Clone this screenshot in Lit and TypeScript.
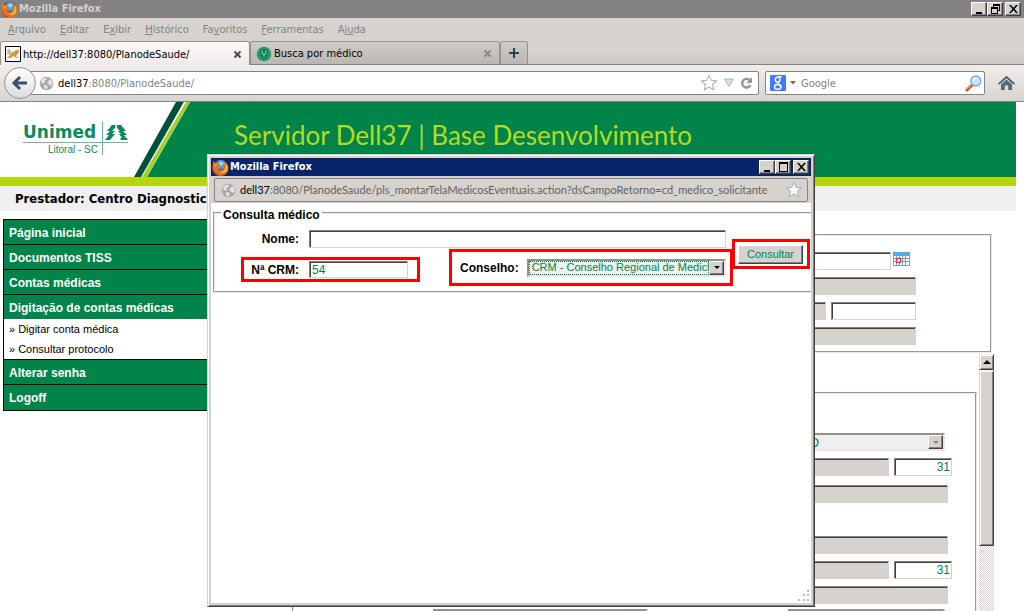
import { LitElement, html, css, svg } from "lit";
import { customElement, property } from "lit/decorators.js";

const firefox = html`<svg class="fx" viewBox="0 0 16 16" aria-hidden="true">
  <circle cx="8" cy="8" r="7.2" fill="#1d5c9e"/>
  <circle cx="8.4" cy="5.2" r="4.2" fill="#4fa3dc"/>
  <path d="M6.5 2.5l2 .6 2.4-.4-.6 2.2-2.4 1.6z" fill="#a7dcf4"/>
  <path d="M1.5 1.6L3.2 4C4.4 3.3 5.6 3.4 6.8 3.9L5.9 5.9 8.2 6.6 7.4 8 5.6 8.4C6 10.4 8.4 11 10 9.8 11.6 8.8 12 6.6 11.2 4.6L10.4 2.2C13.4 3 15.8 5.6 15.6 9 15.4 13 12 15.9 8 15.9 3.6 15.9.4 12.6.4 8.6.3 5.8.8 3.6 1.5 1.6z" fill="#e8701a"/>
  <path d="M12.6 4C15 6.4 15 10 13 12 11 13.6 8.6 13.4 7 12.6 10.6 12.8 13.6 9.6 12.6 4z" fill="#fbc02d"/>
  <path d="M1 8C1.4 12 4 14.8 8 15.2 4 15.8.6 12.6 1 8z" fill="#9c2a0c"/>
  <path d="M2 3.4L3 5 6 4.6 4.2 5.8 3.2 8z" fill="#ffa53a"/>
</svg>`;

const globe = html`<svg class="globe" viewBox="0 0 16 16" aria-hidden="true">
  <circle cx="8" cy="8" r="7.2" fill="#a9a9a9"/>
  <path d="M3 3.6C5 1.8 7 1.6 8.6 2L7.6 4 5.8 5.4 6.4 7.4 4 8 2 6.4zM10 5l2.4-1.6C14 5 14.6 7 14.2 9.2L12 10.6 10.6 8.8 8.8 8zM5.4 9.6L8.4 10l1.2 1.8L8 14.2C6.4 14 5.4 12.6 5.2 11z" fill="#e4e4e4"/>
</svg>`;

const star = html`<svg class="star" viewBox="0 0 18 18" aria-hidden="true">
  <path d="M9 1.4l2.2 5 5.4.5-4.1 3.6 1.3 5.4L9 13.1l-4.8 2.8 1.3-5.4L1.4 6.9l5.4-.5z" fill="#fff" stroke="#b5b2b5" stroke-width="1.1" stroke-linejoin="round"/>
</svg>`;

const glyphs: Record<string, unknown> = {
  min: svg`<path d="M3 9h6v2H3z"/>`,
  max: svg`<path d="M2 1h9v10H2zM3 3v7h7V3z" fill-rule="evenodd"/>`,
  restore: svg`<path d="M4 1h7v7H9V7h1V3H5v1H4zM2 4h7v7H2zM3 6v4h5V6z" fill-rule="evenodd"/>`,
  close: svg`<path d="M2 2h2l2.500 2.800L9 2h2L7.500 6 11 10H9L6.500 7.200 4 10H2l3.500-4z"/>`,
};

@customElement("caption-buttons")
class CaptionButtons extends LitElement {
  @property() middle = "max";
  static styles = css`
    :host { display: flex; margin-left: auto; }
    button { width: 16px; height: 14px; padding: 0; border: 1px solid; border-color: #fff #424142 #424142 #fff; background: #d6d3ce; box-shadow: inset -1px -1px #848284; display: grid; place-items: center; }
    button:last-child { margin-left: 2px; }
    svg { width: 13px; height: 12px; }
  `;
  render() {
    const items = [["min", "Minimizar"], [this.middle, "Maximizar"], ["close", "Fechar"]];
    return items.map(([k, label]) => html`<button aria-label=${label}><svg viewBox="0 0 13 12">${glyphs[k]}</svg></button>`);
  }
}

const palette = css`
  :host { --face: #d6d3ce; --green: #00844a; --shade: #848284; --dark: #424142; --ui: "DejaVu Sans Condensed", "DejaVu Sans", sans-serif; --form: "Liberation Sans", Arial, sans-serif; }
  * { box-sizing: border-box; }
  button, input, select { font: inherit; margin: 0; }
  a { color: inherit; text-decoration: none; }
  svg { display: block; flex: none; }
  .fx { width: 17px; height: 17px; }
  .globe { width: 15px; height: 15px; }
  .star { width: 18px; height: 18px; }
  .field { height: 18px; border: 1px solid; border-color: var(--shade) var(--face) var(--face) var(--shade); box-shadow: inset 1px 1px var(--dark); background: #fff; border-radius: 0; padding: 0 2px; color: var(--green); font: 12px/14px var(--form); outline: 0; min-width: 0; }
  .combo { display: flex; height: 18px; min-width: 0; border: 2px solid; border-color: #949284 #efe7e7 #efe7e7 #949284; background: #efefef; }
  .combo select { flex: 1; min-width: 0; width: 0; appearance: none; border: 0; padding: 0 0 0 3px; background: none; color: var(--green); opacity: 1; font: 11px/13px var(--form); border-radius: 0; outline: 0; }
  .combo i { width: 15px; flex: none; background: var(--face); border: 1px solid; border-color: #fff var(--dark) var(--dark) #fff; box-shadow: inset -1px -1px var(--shade); display: grid; place-items: center; }
  .combo i::after { content: ""; border: 3px solid transparent; border-top-color: #000; border-bottom: 0; }
  fieldset { min-width: 0; margin: 0; padding: 0; border: 2px groove #efe7e7; }
`;

@customElement("popup-window")
class PopupWindow extends LitElement {
  static styles = [palette, css`
    :host { display: flex; flex-direction: column; border: 1px solid; border-color: var(--face) var(--dark) var(--dark) var(--face); background: var(--face); box-shadow: inset 1px 1px #fff, inset -1px -1px var(--shade); padding: 3px; }
    .title { display: flex; align-items: center; height: 18px; gap: 1px; padding: 0 2px 0 1px; background: #08246b; color: #fff; font: bold 11px/18px var(--ui); }
    .url { display: flex; align-items: center; height: 24px; margin: 2px 3px 1px; padding: 0 4px 0 6px; border: 1px solid var(--shade); border-radius: 2px; font: 11px/22px Lato, sans-serif; color: #63615f; white-space: nowrap; }
    .url .globe { margin-right: 4px; }
    .url b { font-weight: normal; color: #000; }
    .url .star { margin-left: auto; }
    .page { flex: 1; background: #fff; overflow: hidden; position: relative; }
    fieldset { margin: 1px -2px 0 2px; padding: 9px 0 5px; }
    legend { margin-left: 6px; padding: 6px 2px 0; font: bold 12px/11px var(--form); }
    label { font: bold 12px/14px var(--form); text-align: right; flex: none; }
    form { display: flex; align-items: flex-start; min-width: 0; }
    .fields { flex: 1; min-width: 0; }
    .row { display: flex; align-items: center; gap: 10px; padding-right: 7px; }
    .row label { width: 84px; }
    .row .field { flex: 1; }
    .second { display: flex; justify-content: space-between; align-items: flex-start; margin-top: 1px; padding-left: 26px; }
    .mark { border: 3px solid #f00; display: flex; align-items: center; gap: 10px; }
    .crm { width: 179px; height: 25px; margin-top: 8px; padding-right: 9px; }
    .crm label { width: 55px; }
    .crm .field { flex: 1; height: 17px; }
    .council { width: 284px; height: 37px; padding: 0 4px 0 8px; gap: 8px; }
    .council .combo { flex: 1; }
    .council select { outline: 1px dotted var(--green); outline-offset: -1px; }
    .submit { margin: 9px 1px 0 -1px; padding: 0 4px 0 3px; width: 78px; height: 30px; flex: none; }
    .submit button { flex: 1; height: 19px; padding: 0; border: 1px solid; border-color: #fff var(--dark) var(--dark) #fff; box-shadow: inset -1px -1px var(--shade); background: var(--face); color: var(--green); font: 11px/16px var(--form); }
    .grip { position: absolute; right: 2px; bottom: 2px; width: 11px; height: 11px; fill: #bdbabd; }
  `];
  render() {
    return html`
      <div class="title">${firefox}<span>Mozilla Firefox</span><caption-buttons></caption-buttons></div>
      <div class="url">${globe}<b>dell37</b>:8080/PlanodeSaude/pls_montarTelaMedicosEventuais.action?dsCampoRetorno=cd_medico_solicitante${star}</div>
      <div class="page">
        <fieldset>
          <legend>Consulta médico</legend>
          <form @submit=${(e: Event) => e.preventDefault()}>
            <div class="fields">
              <div class="row"><label for="nome">Nome:</label><input class="field" id="nome"></div>
              <div class="second">
                <div class="mark crm"><label for="crm">Nª CRM:</label><input class="field" id="crm" value="54"></div>
                <div class="mark council"><label for="conselho">Conselho:</label><span class="combo"><select id="conselho"><option>CRM - Conselho Regional de Medicina</option></select><i></i></span></div>
              </div>
            </div>
            <div class="mark submit"><button>Consultar</button></div>
          </form>
        </fieldset>
        <svg class="grip" viewBox="0 0 11 11"><path d="M9 0h2v2H9zM5 4h2v2H5zM9 4h2v2H9zM0 9h2v2H0zM5 9h2v2H5zM9 9h2v2H9z"/></svg>
      </div>`;
  }
}

@customElement("app-root")
class AppRoot extends LitElement {
  static styles = [palette, css`
    :host { display: flex; flex-direction: column; height: 100vh; position: relative; overflow: hidden; background: #fff; font: 11px/14px var(--ui); }
    .title { display: flex; align-items: center; gap: 1px; height: 18px; flex: none; padding: 0 3px 0 1px; background: var(--shade); color: var(--face); font: bold 11px/18px var(--ui); }
    .menu { display: flex; gap: 14px; padding: 0 8px; height: 23px; flex: none; background: var(--face); color: #848284; line-height: 23px; }
    .tabs { display: flex; height: 24px; flex: none; background: linear-gradient(#d6d3ce 50%, #cbc8c5); border-bottom: 1px solid #848284; }
    .tab { display: flex; align-items: center; width: 250px; padding: 1px 6px 0 5px; gap: 2px; border: 1px solid #94918f; border-bottom: 0; border-radius: 3px 3px 0 0; background: linear-gradient(#cfccc8, #b9b6b3); }
    .tab span { padding-top: 1px; }
    .tab.on { background: linear-gradient(#fbf9f9, #efebe9); margin-bottom: -1px; padding-left: 4px; }
    .tab button { margin-left: auto; width: 10px; height: 12px; padding: 0; border: 0; background: none; }
    .tab button svg { width: 9px; height: 9px; stroke: #8a8886; stroke-width: 2; }
    .tab.on button svg { stroke: #4a4a4a; }
    .ico { width: 16px; height: 16px; }
    .plus { width: 28px; padding: 0; border: 1px solid #94918f; border-bottom: 0; border-radius: 3px 3px 0 0; background: linear-gradient(#cfccc8, #b9b6b3); display: grid; place-items: center; }
    .nav { display: flex; align-items: center; height: 37px; flex: none; padding: 0 9px 0 4px; background: linear-gradient(#f1edeb, #d8d4d1); border-bottom: 1px solid #848284; }
    .back { width: 32px; height: 32px; padding: 0; flex: none; border: 1px solid #94929c; border-radius: 50%; background: linear-gradient(#fff, #dedbe0); display: grid; place-items: center; z-index: 1; }
    .bar { display: flex; align-items: center; height: 24px; border: 1px solid #848284; border-radius: 2px; background: #fff; color: #848284; }
    .bar input { border: 0; outline: 0; padding: 2px 0 0; min-width: 0; flex: 1; background: none; color: #848284; }
    .bar input::placeholder { color: #848284; opacity: 1; }
    .bar b { font-weight: normal; color: #000; }
    .bar span { padding-top: 2px; }
    .address { flex: 1; margin-left: -15px; padding: 0 4px 0 17px; }
    .address .globe { margin-right: 4px; }
    .address .star { margin-left: auto; }
    .drop { margin-left: 5px; }
    .reload { margin: 0 1px 0 5px; }
    .engine { margin: 0 5px 0 4px; }
    .search { width: 220px; margin: 0 13px 0 6px; padding: 0 2px 0 4px; }
    .banner { display: flex; height: 84px; flex: none; margin-right: 8px; background: var(--green); border-bottom: 9px solid #b5d60f; }
    .brand { width: 190px; flex: none; display: grid; }
    .brand > * { grid-area: 1 / 1; }
    .slash { width: 190px; height: 75px; }
    .logo { display: grid; grid-template-columns: 79px 26px; margin: 20px 0 0 23px; align-content: start; color: #0f8a5f; }
    .logo strong { font: bold 17px/20px "DejaVu Sans", sans-serif; border-bottom: 1px solid #6fb59c; }
    .logo small { grid-row: 2; font: 10px/14px var(--form); text-align: right; padding-right: 4px; }
    .logo .pines { grid-row: 1 / 3; grid-column: 2; width: 26px; height: 35px; }
    h1 { margin: 0; padding: 17px 0 0 44px; font: 26px/32px Lato, sans-serif; color: #b5db21; white-space: nowrap; }
    .provider { height: 25px; flex: none; margin-right: 8px; padding-left: 15px; background: #efefef; font: bold 13px/25px var(--ui); }
    .body { display: flex; flex: 1; min-height: 0; padding: 0 30px 0 3px; }
    .side { width: 212px; flex: none; align-self: flex-start; margin-top: 8px; border: 1px solid #000; border-top: 0; }
    .side a { display: block; height: 25px; padding-left: 5px; border-top: 1px solid #000; background: var(--green); color: #fff; font: bold 12px/26px var(--form); }
    .side a.sub { height: 20px; border: 0; background: #fff; color: #000; font: 11px/20px var(--form); }
    .side a:last-child { height: 26px; }
    .main { flex: 1; min-width: 0; display: flex; flex-direction: column; margin-left: 77px; }
    .line { display: flex; justify-content: flex-end; gap: 5px; margin-bottom: 7px; height: 18px; }
    .line .field { width: 420px; }
    .line .off { background: var(--face); border-color: var(--shade) var(--face) var(--face); box-shadow: inset 0 1px var(--dark); }
    .line .num { width: 58px; text-align: right; padding-right: 1px; }
    .line .mid { width: 85px; }
    .line .rest { width: 320px; }
    .one { margin: 23px 2px 0 0; padding: 16px 74px 0 0; height: 119px; flex: none; }
    .cal { width: 17px; height: 14px; margin-right: 6px; }
    .line .date { margin-right: -3px; }
    .frame { flex: 1; min-height: 0; display: flex; gap: 2px; margin-top: 1px; }
    .scroll { flex: 1; overflow: hidden; padding-top: 38px; }
    .two { padding: 39px 27px 40px 0; }
    .two .count { margin-right: -4px; }
    .two .first { margin-bottom: 9px; }
    .two .tight { margin-bottom: 5px; }
    .two .gap { margin-bottom: 33px; }
    .two .pick, .two .last { margin-right: 3px; }
    .pick .combo { width: 141px; }
    .pick .combo select { font-size: 13px; }
    .pick .combo i::after { border-top-color: var(--shade); }
    .last { justify-content: space-between; padding-left: 139px; }
    .last .combo { width: 157px; }
    .last .combo:first-child { width: 215px; }
    .track { width: 15px; flex: none; display: flex; flex-direction: column; background: repeating-conic-gradient(#d6d3ce 0 25%, #fff 0 50%) 0 0 / 2px 2px; }
    .track button, .thumb { border: 1px solid; border-color: #efebe7 var(--dark) var(--dark) var(--face); box-shadow: inset 1px 1px #fff, inset -1px -1px var(--shade); background: var(--face); padding: 0; flex: none; }
    .track button { height: 16px; display: grid; place-items: center; }
    .thumb { height: 176px; }
    .popup { position: absolute; left: 207px; top: 154px; width: 608px; height: 453px; z-index: 2; }
  `];
  render() {
    const menu = [["", "A", "rquivo"], ["", "E", "ditar"], ["E", "x", "ibir"], ["", "H", "istórico"], ["Fa", "v", "oritos"], ["", "F", "erramentas"], ["Aj", "u", "da"]];
    const x = html`<svg viewBox="0 0 9 9"><path d="M1.500 1.500l6 6M7.500 1.500l-6 6"/></svg>`;
    const off = (cls = "") => html`<input class="field off ${cls}" disabled aria-label="Campo bloqueado">`;
    return html`
      <div class="title">${firefox}<span>Mozilla Firefox</span><caption-buttons middle="restore"></caption-buttons></div>
      <nav class="menu">${menu.map(([a, b, c]) => html`<span>${a}<u>${b}</u>${c}</span>`)}</nav>
      <div class="tabs">
        <div class="tab on">
          <svg class="ico" viewBox="0 0 16 16"><path d="M.5 .5h15v15H.5z" fill="#fff" stroke="#000"/><path d="M2 12l3-3 1-2.500L9 6l2-2.500 1 1 2-1-.2 3L12 8.500l-1 2 3 1.500h-3L8.500 10 6 12z" fill="#d69a3a"/><path d="M2 4l3 3M2 7l3 1M3.500 3l2 3" stroke="#7a6a4a" stroke-width=".8"/></svg>
          <span>http://dell37:8080/PlanodeSaude/</span><button aria-label="Fechar aba">${x}</button>
        </div>
        <div class="tab">
          <svg class="ico" viewBox="0 0 16 16"><circle cx="8" cy="8" r="7.300" fill="#2a9a6a"/><path d="M4 4q4-2 8 0v4q-1 4-4 5-3-1-4-5z" fill="#0f7a4e"/><path d="M6 4.500v2q0 2 2 2t2-2v-2M8 8.500V11" stroke="#a6e0c6" fill="none"/></svg>
          <span>Busca por médico</span><button aria-label="Fechar aba">${x}</button>
        </div>
        <button class="plus" aria-label="Nova aba"><svg width="12" height="12" viewBox="0 0 12 12"><path d="M6 1v10M1 6h10" stroke="#29424f" stroke-width="2"/></svg></button>
      </div>
      <div class="nav">
        <button class="back" aria-label="Voltar"><svg width="18" height="16" viewBox="0 0 18 16"><path d="M9 2L3 8l6 6M3 8h13" fill="none" stroke="#3d5163" stroke-width="3"/></svg></button>
        <div class="bar address">${globe}<span><b>dell37</b>:8080/PlanodeSaude/</span>${star}
          <svg class="drop" width="12" height="10" viewBox="0 0 12 10"><path d="M1.500 1h9L6 8.500z" fill="#d6dfe8" stroke="#b0b6bd"/></svg>
          <svg class="reload" width="13" height="14" viewBox="0 0 13 14"><path d="M9.800 4.400A4.300 4.300 0 1 0 10.400 9" fill="none" stroke="#8a98a5" stroke-width="2.400"/><path d="M12 1v6H6.500z" fill="#8a98a5"/></svg>
        </div>
        <div class="bar search">
          <svg width="16" height="16" viewBox="0 0 16 16"><rect width="16" height="16" rx="1" fill="#3f7bfb"/><ellipse cx="7.700" cy="4.600" rx="2.300" ry="2.700" fill="none" stroke="#fff" stroke-width="1.500"/><ellipse cx="7.700" cy="11.900" rx="3.200" ry="2.300" fill="none" stroke="#fff" stroke-width="1.500"/><path d="M8 1.700h4M8.500 7.300q-1.500 1 0 1.700 2 .8 2.400 2" fill="none" stroke="#fff" stroke-width="1.300"/></svg>
          <svg class="engine" width="6" height="4" viewBox="0 0 6 4"><path d="M0 0h6L3 3.500z" fill="#6b6b6b"/></svg>
          <input placeholder="Google" aria-label="Pesquisar com Google">
          <svg width="17" height="17" viewBox="0 0 17 17"><path d="M7.500 9.500L2 15" stroke="#b5561c" stroke-width="3" stroke-linecap="round"/><path d="M7 9L2 14" stroke="#f0a24a" stroke-width="1.200" stroke-linecap="round"/><circle cx="10.800" cy="6" r="5" fill="#c4e4fb" stroke="#7fa6cc" stroke-width="1.300"/><path d="M8 5.500q1-2.500 3.500-2.300" stroke="#fff" stroke-width="1.400" fill="none"/></svg>
        </div>
        <svg width="17" height="16" viewBox="0 0 17 16"><path d="M8.500.8L17 8.600l-1.300 1.200L8.500 3.300 1.300 9.800 0 8.600z" fill="#4a5c6a"/><path d="M3 9.500l5.500-5 5.500 5V15h-3.800v-4.500H6.800V15H3z" fill="#546878"/></svg>
      </div>
      <header class="banner">
        <div class="brand">
          <svg class="slash" viewBox="0 0 190 75"><path d="M0 0h190L147 75H0z" fill="#fff"/><path d="M176 0h8l-42 75h-8z" fill="#00503c"/><path d="M184 0h2l-43 75h-2z" fill="#fff"/><path d="M186 0h4l-43 75h-5z" fill="#a5cf2d"/></svg>
          <div class="logo"><strong>Unimed</strong><small>Litoral - SC</small>
            <svg class="pines" viewBox="0 0 26 35"><path d="M.5 0v33M1 20.500h25" stroke="#6fb59c"/><path d="M13.500 5.500V3H10L5 9h3l-4 4h3l-4 5h5l5-6h-3l3-3h-3zM15 3h4l5 6h-3l4 4h-3l4 5h-7l-1-2h2l-3-4h2l-3-3h2l-3-3z" fill="#0f8a5f"/></svg>
          </div>
        </div>
        <h1>Servidor Dell37 | Base Desenvolvimento</h1>
      </header>
      <div class="provider">Prestador: Centro Diagnostic</div>
      <div class="body">
        <nav class="side">
          <a href="#">Página inicial</a><a href="#">Documentos TISS</a><a href="#">Contas médicas</a><a href="#">Digitação de contas médicas</a>
          <a class="sub" href="#">» Digitar conta médica</a><a class="sub" href="#">» Consultar protocolo</a>
          <a href="#">Alterar senha</a><a href="#">Logoff</a>
        </nav>
        <div class="main">
          <fieldset class="one">
            <div class="line"><input class="field date" aria-label="Data"><svg class="cal" viewBox="0 0 17 14"><path d="M0 0h17v14H0z" fill="#6f9fe0"/><path d="M0 0h17v2.500H0z" fill="#3fb4f0"/><path d="M1 4h2v2H1zM4 4h2v2H4zM7 4h2v2H7zM10 4h2v2h-2zM13 4h3v2h-3zM1 7h2v2H1zM7 7h2v2H7zM10 7h2v2h-2zM13 7h3v2h-3zM1 10h2v3H1zM4 10h2v3H4zM7 10h2v3H7zM10 10h2v3h-2zM13 10h3v3h-3z" fill="#fff"/><path d="M3.500 6.500h4v4h-4z" fill="#fff" stroke="#e23a3a" stroke-width="1.300"/></svg></div>
            <div class="line">${off()}</div>
            <div class="line">${off("rest")}<input class="field mid" aria-label="Código"></div>
            <div class="line">${off()}</div>
          </fieldset>
          <div class="frame">
            <div class="scroll">
              <fieldset class="two">
                <div class="line pick"><span class="combo"><select disabled aria-label="Tipo"><option>O</option></select><i></i></span></div>
                <div class="line count first">${off("rest")}<input class="field num" value="31" aria-label="Conselho"></div>
                <div class="line gap">${off()}</div>
                <div class="line">${off()}</div>
                <div class="line count">${off("rest")}<input class="field num" value="31" aria-label="Conselho executante"></div>
                <div class="line tight">${off()}</div>
                <div class="line last"><span class="combo"></span><span class="combo"></span></div>
              </fieldset>
            </div>
            <div class="track"><button aria-label="Rolar para cima"><svg width="8" height="4" viewBox="0 0 8 4"><path d="M4 0l4 4H0z"/></svg></button><div class="thumb"></div></div>
          </div>
        </div>
      </div>
      <popup-window class="popup"></popup-window>`;
  }
}
